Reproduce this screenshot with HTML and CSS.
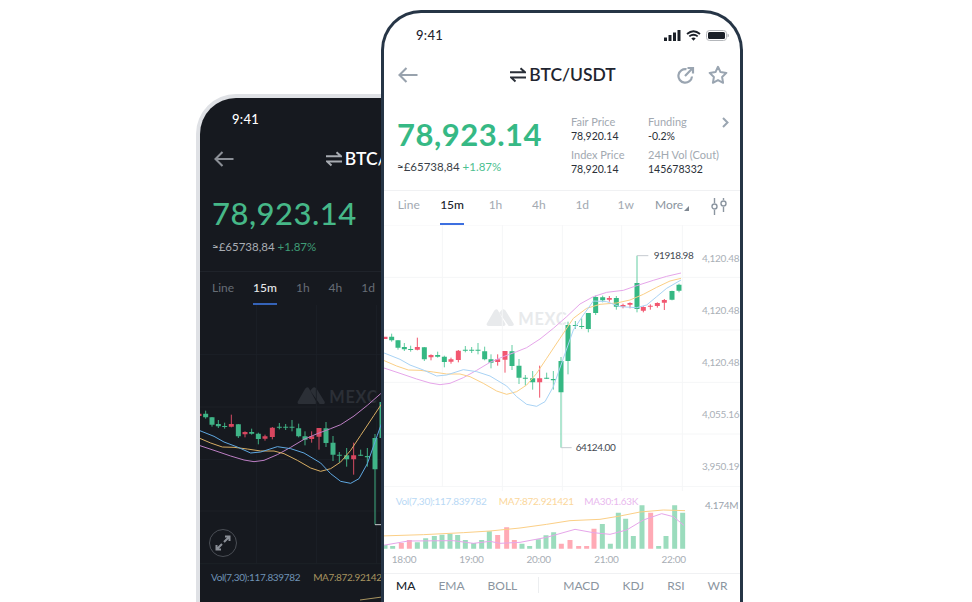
FILE: index.html
```html
<!DOCTYPE html>
<html lang="en">
<head>
<meta charset="utf-8">
<title>BTC/USDT</title>
<link rel="stylesheet" href="styles.css">
</head>
<body>
<svg class="defs" width="0" height="0" aria-hidden="true">
  <symbol id="swap" viewBox="0 0 16 16"><path d="M0 5.2H15L10.5 1.2M16 10.4H1L5.5 14.4" fill="none" stroke="currentColor" stroke-width="2"/></symbol>
  <symbol id="back" viewBox="0 0 20 16"><path d="M19.5 8H1.5M8.5 1L1.5 8L8.5 15" fill="none" stroke="currentColor" stroke-width="2.1"/></symbol>
  <g id="logo">
    <path class="logo-mark" d="M320 296 342 258Q347 250 353 254L376 296Q378 303 371 303H326Q318 303 320 296ZM362 258Q368 248 376 256L401 296Q403 303 396 303H386L358 263Z"/>
    <text class="logo-text" x="415" y="299">MEXC</text>
  </g>
  <g id="market">
    <path class="grid" d="M187 0V786M367 0V786M547 0V786M725 0V786M907 0V786M0 0H1080M0 157H1080M0 315H1080M0 472H1080M0 627H1080M0 785H1080"/>
    <path class="wick-g" d="M35 326V350M54 345V374M73 354V378M92 362V380M133 366V408M173 380V398M193 392V427M256 363V382M275 366V384M294 354V388M314 365V406M333 388V430M396 360V435M417 402V477M436 450V482M458 438V494M500 443V462M520 438V494M543 396V668M564 290V448M586 288V312M605 280V312M625 264V322M647 212V270M668 212V232M709 213V254M771 92V262M876 197V226M897 176V202"/>
    <path class="wick-r" d="M112 338V376M153 388V406M213 398V416M235 375V412M353 388V422M375 378V443M479 422V518M688 213V230M729 236V250M750 232V250M790 244V262M811 238V254M832 232V248M853 222V255"/>
    <path class="body-g" d="M35 335V346M54 346V368M73 366V373M92 372V375M133 367V403M173 390V395M193 395V411M256 374V377M275 374V377M294 374V377M314 379V403M333 403V413M396 379V423M417 422V458M436 458V461M458 460V472M500 458V461M520 462V466M543 408V502M564 300V408M586 300V303M605 303V306M625 264V312M647 216V264M668 217V226M709 219V245M771 174V252M876 198V224M897 179V197"/>
    <path class="body-r" d="M15 335V342M112 366V374M153 390V397M213 403V410M235 377V405M353 403V411M375 378V404M479 460V472M688 219V224M729 240V245M750 234V239M790 246V257M811 242V245M832 234V243M853 225V233"/>
    <polyline class="ma-pink" points="0,425 15,430 60,445 110,462 150,474 180,479 210,475 250,458 290,436 330,412 370,395 410,380 440,368 480,342 520,310 560,275 600,237 640,215 680,202 730,196 770,182 820,166 860,154 903,144"/>
    <polyline class="ma-orange" points="0,402 15,408 50,423 85,435 120,436 160,441 200,447 240,447 270,455 310,475 350,498 380,508 410,500 440,480 470,445 500,400 540,340 580,280 620,250 660,238 710,234 750,225 790,208 830,187 870,168 903,160"/>
    <polyline class="ma-blue" points="0,380 15,385 60,403 90,420 130,435 170,453 200,450 250,434 290,440 330,453 380,483 410,515 440,538 470,544 495,530 520,485 550,400 580,315 610,270 640,228 680,230 720,245 770,248 800,240 830,215 860,190 903,165"/>
    <path class="callout" d="M771 92H805M543 668H575"/>
  </g>
</svg>

<main class="stage">
  <section class="phone phone-dark">
    <div class="status"><span class="clock">9:41</span></div>
    <header class="nav">
      <svg class="icon-back"><use href="#back"/></svg>
      <h1 class="pair"><svg class="icon-swap"><use href="#swap"/></svg>BTC/USDT</h1>
      <span></span>
    </header>
    <div class="ticker">
      <div class="quote">
        <div class="price">78,923.14</div>
        <div class="fiat">≈£65738,84 <span class="change">+1.87%</span></div>
      </div>
    </div>
    <nav class="tabs">
      <span class="tab">Line</span><span class="tab tab-active">15m</span><span class="tab">1h</span><span class="tab">4h</span><span class="tab">1d</span>
    </nav>
    <div class="chart">
      <svg class="chart-svg" viewBox="18 9 1068 780"><use href="#logo" x="-9" y="3"/><use href="#market"/></svg>
      <div class="expand">
        <svg width="16" height="16" viewBox="0 0 16 16"><path d="M9 7 14 2M10 1.500h4.500V6M7 9 2 14M6 14.500H1.500V10" fill="none" stroke="#8b9098" stroke-width="2"/></svg>
      </div>
    </div>
    <div class="legend">
      <span class="leg-blue">Vol(7,30):117.839782</span><span class="leg-orange">MA7:872.92142</span>
    </div>
    <svg class="dark-vol" viewBox="0 0 356 14"><path d="M160 11 182 8"/></svg>
  </section>

  <section class="phone phone-light">
    <div class="status">
      <span class="clock">9:41</span>
      <div class="status-icons">
        <svg width="17" height="11" viewBox="0 0 17 11"><path d="M0 7.500h3V11H0zM4.500 5h3v6h-3zM9 2.500h3V11H9zM13.500 0h3v11h-3z" fill="#1b2028"/></svg>
        <svg width="15" height="11" viewBox="0 0 15 11"><path d="M1 4Q7.500-1.500 14 4M3.300 6.400Q7.500 3 11.700 6.400" fill="none" stroke="#1b2028" stroke-width="1.800"/><path d="M5.300 8.200Q7.500 6.800 9.700 8.200L7.500 10.800z" fill="#1b2028"/></svg>
        <svg width="23" height="11" viewBox="0 0 23 11"><rect x=".5" y=".5" width="20" height="10" rx="3" fill="none" stroke="#b4b7bb"/><rect x="2" y="2" width="17" height="7" rx="1.500" fill="#1b2028"/><path d="M21.500 3.500Q23 4 23 5.500T21.500 7.500z" fill="#b4b7bb"/></svg>
      </div>
    </div>
    <header class="nav">
      <svg class="icon-back"><use href="#back"/></svg>
      <h1 class="pair"><svg class="icon-swap"><use href="#swap"/></svg>BTC/USDT</h1>
      <div class="nav-actions">
        <svg width="19" height="18" viewBox="0 0 19 18"><path d="M9.500 3.200A6.800 6.800 0 1 0 15 10.500M8 10 15 2.800M10.500 2H16V7.500" fill="none" stroke="#9aa5b1" stroke-width="2.200"/></svg>
        <svg width="20" height="20" viewBox="0 0 20 20"><path d="M10 1.800l2.500 5.300 5.900.8-4.300 4.100 1 5.800L10 15.100l-5.100 2.700 1-5.800-4.300-4.100 5.900-.8z" fill="none" stroke="#9aa5b1" stroke-width="2" stroke-linejoin="round"/></svg>
      </div>
    </header>
    <div class="ticker">
      <div class="quote">
        <div class="price">78,923.14</div>
        <div class="fiat">≈£65738,84 <span class="change">+1.87%</span></div>
      </div>
      <div class="stats">
        <div class="stat"><span class="stat-label">Fair Price</span><span class="stat-value">78,920.14</span></div>
        <div class="stat"><span class="stat-label">Funding</span><span class="stat-value">-0.2%</span></div>
        <svg class="chevron" width="7" height="11" viewBox="0 0 7 11"><path d="M1 1l4.500 4.500L1 10" fill="none" stroke="#9aa5b1" stroke-width="2"/></svg>
        <div class="stat"><span class="stat-label">Index Price</span><span class="stat-value">78,920.14</span></div>
        <div class="stat"><span class="stat-label">24H Vol (Cout)</span><span class="stat-value">145678332</span></div>
      </div>
    </div>
    <nav class="tabs">
      <span class="tab">Line</span><span class="tab tab-active">15m</span><span class="tab">1h</span><span class="tab">4h</span><span class="tab">1d</span><span class="tab">1w</span>
      <span class="tab tab-more">More<svg width="5" height="5" viewBox="0 0 5 5"><path d="M5 0V5H0z" fill="#7f8892"/></svg></span>
      <span class="tab tab-icon"><svg width="16" height="17" viewBox="0 0 16 17"><path d="M3.500 0V5M3.500 12V17M12.500 0V2M12.500 9V14" stroke="#8b95a0" stroke-width="1.400" fill="none"/><circle cx="3.500" cy="8.500" r="2.500" fill="none" stroke="#8b95a0" stroke-width="1.400"/><circle cx="12.500" cy="5.500" r="2.500" fill="none" stroke="#8b95a0" stroke-width="1.400"/></svg></span>
    </nav>
    <div class="chart">
      <svg class="chart-svg" viewBox="12 0 1068 786">
        <use href="#logo"/>
        <use href="#market"/>
        <g class="axis">
          <text x="1078" y="110">4,120.48</text>
          <text x="1078" y="266">4,120.48</text>
          <text x="1078" y="422">4,120.48</text>
          <text x="1078" y="578">4,055.16</text>
          <text x="1078" y="734">3,950.19</text>
        </g>
        <text class="callout-text" x="821" y="102">91918.98</text>
        <text class="callout-text" x="587" y="678">64124.00</text>
      </svg>
    </div>
    <div class="volume">
      <svg class="volume-svg" viewBox="12 231 1068 258">
        <path class="grid" d="M367 231V243M547 231V243M725 231V243M907 231V243"/>
        <path class="vol-g" d="M15 416V405M38 416V408M112 416V397M137 416V385M163 416V378M186 416V374M210 416V371M233 416V375M256 416V390M281 416V399M305 416V390M328 416V364M426 416V401M449 416V408M475 416V388M498 416V376M521 416V367M667 416V342M691 416V401M715 416V308M737 416V326M760 416V378M786 416V286M836 416V408M858 416V378M884 416V286M908 416V308"/>
        <path class="vol-r" d="M64 416V399M88 416V390M353 416V375M380 416V352M403 416V390M544 416V401M570 416V390M596 416V408M620 416V408M642 416V356M812 416V308"/>
        <polyline class="ma-orange" points="0,378 130,374 250,368 330,363 420,354 500,343 570,332 660,328 720,318 780,306 850,300 915,302"/>
        <polyline class="ma-pink" points="0,407 15,405 85,393 220,392 280,400 330,394 360,400 420,397 500,382 585,358 640,368 690,373 740,360 790,330 845,311 880,320 912,346"/>
        <text class="vol-label-blue" x="47" y="284">Vol(7,30):117.839782</text>
        <text class="vol-label-orange" x="356" y="284">MA7:872.921421</text>
        <text class="vol-label-pink" x="613" y="284">MA30:1.63K</text>
        <text class="vol-max" x="1075" y="298">4.174M</text>
        <g class="times">
          <text x="72" y="458">18:00</text>
          <text x="274" y="458">19:00</text>
          <text x="476" y="458">20:00</text>
          <text x="679" y="458">21:00</text>
          <text x="881" y="458">22:00</text>
        </g>
      </svg>
    </div>
    <nav class="indicators">
      <span class="ind ind-active">MA</span><span class="ind">EMA</span><span class="ind">BOLL</span>
      <span class="ind-sep"></span>
      <span class="ind">MACD</span><span class="ind">KDJ</span><span class="ind">RSI</span><span class="ind">WR</span>
    </nav>
  </section>
</main>
</body>
</html>
```

FILE: styles.css
```css
* { box-sizing: border-box; }

html, body {
  margin: 0;
  height: 100%;
  background: #fff;
  overflow: hidden;
}

body {
  font-family: "Lato", "Noto Sans", sans-serif;
}

.defs { position: absolute; }

.stage {
  position: relative;
  width: 972px;
  height: 602px;
  overflow: hidden;
}

/* phones sit on a free canvas and overlap */
.phone {
  position: absolute;
  width: 362px;
  height: 640px;
  border-style: solid;
  border-radius: 40px;
  overflow: hidden;
  display: flex;
  flex-direction: column;
}

.phone-dark {
  left: 196px;
  top: 94px;
  border-width: 4px 3px 0 4px;
  border-color: #dfe1e5;
  background: #16191f;
  color: #fff;
  --grid: #1c2027;
  --blue: #5ea7e0;
  --orange: #d7ad63;
  --pink: #bd7fc4;
  --logo: #2b2f36;
  --callout: #c9ccd0;
  --wick-g: #3fae82;
  --body-g: #3fb487;
  --wick-r: #d34a62;
  --body-r: #d8465f;
}

.phone-light {
  left: 381px;
  top: 10px;
  border-width: 3px 3px 0;
  border-color: #263546;
  background: #fff;
  color: #1f2530;
  --grid: #f5f6f7;
  --blue: #a9d3f5;
  --orange: #fbcf86;
  --pink: #e6a6ea;
  --logo: #e8eaec;
  --callout: #c5cad0;
  --wick-g: #63cda2;
  --body-g: #35b883;
  --wick-r: #f0566d;
  --body-r: #f25770;
}

/* status bar */
.status {
  flex: none;
  height: 44px;
  display: flex;
  align-items: center;
  justify-content: space-between;
  padding: 0 11px 0 32px;
}
.phone-dark .status { height: 42px; }

.clock {
  font-size: 13px;
  font-weight: 500;
  letter-spacing: .3px;
}

.status-icons {
  display: flex;
  align-items: center;
  gap: 5px;
}
.status-icons svg { display: block; }

/* nav */
.nav {
  flex: none;
  height: 36px;
  display: grid;
  grid-template-columns: 1fr auto 1fr;
  align-items: center;
  padding: 0 12px 0 14px;
}
.phone-dark .nav { height: 37px; }

.icon-back {
  width: 20px;
  height: 16px;
  color: #98a2ad;
}
.phone-dark .icon-back { color: #8b8f96; }

.pair {
  margin: 0;
  display: flex;
  align-items: center;
  gap: 3px;
  font-size: 17.5px;
  font-weight: 600;
  line-height: 24px;
  white-space: nowrap;
}

.icon-swap {
  width: 16px;
  height: 16px;
  color: #2a2f38;
}
.phone-dark .icon-swap { color: #a7abb1; }

.nav-actions {
  display: flex;
  justify-content: flex-end;
  align-items: center;
  gap: 12px;
}

/* ticker */
.ticker {
  flex: none;
  height: 98px;
  display: flex;
  padding-top: 21px;
  border-bottom: 1px solid #f0f1f3;
}
.phone-dark .ticker {
  height: 95px;
  padding-top: 18px;
  border-bottom-color: #1f232a;
}

.quote {
  width: 187px;
  padding-left: 13px;
}
.phone-dark .quote { width: 300px; padding-left: 12px; }

.price {
  margin-top: 2px;
  font-size: 31px;
  line-height: 36px;
  font-weight: 700;
  letter-spacing: .5px;
  color: #36b985;
  white-space: nowrap;
}
.phone-dark .price { margin-top: 0; color: #46b888; font-weight: 500; }

.fiat {
  margin-top: 7px;
  font-size: 11.5px;
  line-height: 16px;
  color: #3a3f48;
  white-space: nowrap;
}
.phone-dark .fiat { margin-top: 8px; color: #a9adb3; }

.change { color: #4cc090; }
.phone-dark .change { color: #3f9c76; }

.stats {
  display: grid;
  grid-template-columns: 77px 77px auto;
  align-content: start;
  row-gap: 3px;
}

.stat {
  display: flex;
  flex-direction: column;
  white-space: nowrap;
}

.stat-label {
  font-size: 11px;
  line-height: 15px;
  color: #a2a9b1;
}

.stat-value {
  font-size: 10.5px;
  line-height: 15px;
  color: #2b3038;
}

.chevron { margin: 3px 0 0 -3px; }

/* time tabs */
.tabs {
  flex: none;
  height: 34px;
  display: grid;
  grid-template-columns: repeat(8, 43.4px);
  justify-items: center;
  padding-left: 3px;
  font-size: 12px;
}
.phone-dark .tabs {
  height: 33px;
  display: flex;
  gap: 19px;
  padding-left: 12px;
}

.tab {
  height: 34px;
  line-height: 28px;
  color: #a2a9b1;
  white-space: nowrap;
}
.phone-dark .tab { height: 33px; line-height: 32px; color: #666d76; }

.tab-active {
  font-weight: 500;
  color: #20252e;
  border-bottom: 2px solid #3d6fe0;
}
.phone-dark .tab-active { color: #e6e8ea; border-bottom-color: #3563b8; }

.tab-more {
  display: flex;
  align-items: flex-start;
  margin-left: 6px;
  color: #8b95a0;
}
.tab-more svg { margin: 15px 0 0 1px; }

.tab-icon { margin-left: 13px; }
.tab-icon svg { display: block; margin-top: 7px; }

/* chart */
.chart {
  position: relative;
  flex: none;
  height: 262px;
}
.phone-dark .chart { height: 260px; }

.chart-svg, .volume-svg {
  display: block;
  width: 356px;
  height: 100%;
}

.grid { fill: none; stroke: var(--grid); stroke-width: 3; }
.wick-g { fill: none; stroke: var(--wick-g); stroke-width: 3; }
.wick-r { fill: none; stroke: var(--wick-r); stroke-width: 3; }
.body-g { fill: none; stroke: var(--body-g); stroke-width: 15; }
.body-r { fill: none; stroke: var(--body-r); stroke-width: 15; }
.ma-pink { fill: none; stroke: var(--pink); stroke-width: 3; stroke-linejoin: round; }
.ma-orange { fill: none; stroke: var(--orange); stroke-width: 3; stroke-linejoin: round; }
.ma-blue { fill: none; stroke: var(--blue); stroke-width: 3; stroke-linejoin: round; }
.callout { fill: none; stroke: var(--callout); stroke-width: 3; }

.logo-mark { fill: var(--logo); }
.logo-text {
  fill: var(--logo);
  font-size: 49px;
  font-weight: 700;
  letter-spacing: 2px;
}

.axis text {
  fill: #aab0b7;
  font-size: 30px;
  letter-spacing: -.8px;
  text-anchor: end;
}

.callout-text {
  fill: #454a52;
  font-size: 30px;
  letter-spacing: -1.2px;
}

.expand {
  position: absolute;
  left: 9px;
  top: 224px;
  width: 28px;
  height: 28px;
  display: flex;
  align-items: center;
  justify-content: center;
  border: 1px solid #4a4e55;
  border-radius: 50%;
}

/* dark legend */
.legend {
  flex: none;
  display: flex;
  gap: 13px;
  padding-left: 11px;
  font-size: 10px;
  letter-spacing: -.35px;
  line-height: 24px;
  white-space: nowrap;
}
.leg-blue { color: #6f93b6; }
.leg-orange { color: #a8945f; }

.dark-vol {
  flex: none;
  display: block;
  width: 356px;
  height: 14px;
  fill: none;
  stroke: #a8945f;
}

/* volume */
.volume {
  flex: none;
  height: 86px;
}

.vol-g { fill: none; stroke: #9bdcbd; stroke-width: 15; }
.vol-r { fill: none; stroke: #ffaab5; stroke-width: 15; }

.volume-svg text { font-size: 30px; letter-spacing: -.8px; }
.vol-label-blue { fill: #b9d9f5; }
.vol-label-orange { fill: #fbd79b; }
.vol-label-pink { fill: #e9b9ee; }
.volume-svg .vol-max { fill: #9aa3ad; text-anchor: end; }
.times text { fill: #a8aeb5; text-anchor: middle; }

/* indicators */
.indicators {
  flex: none;
  height: 29px;
  display: flex;
  align-items: center;
  gap: 23px;
  padding: 0 0 6px 12px;
  border-top: 1px solid #f0f1f3;
  font-size: 12px;
  color: #8b95a0;
}

.ind-active { color: #20252e; font-weight: 500; }

.ind-sep {
  width: 1px;
  height: 16px;
  margin: 0 1px 0 -2px;
  background: #eceef0;
}
```
